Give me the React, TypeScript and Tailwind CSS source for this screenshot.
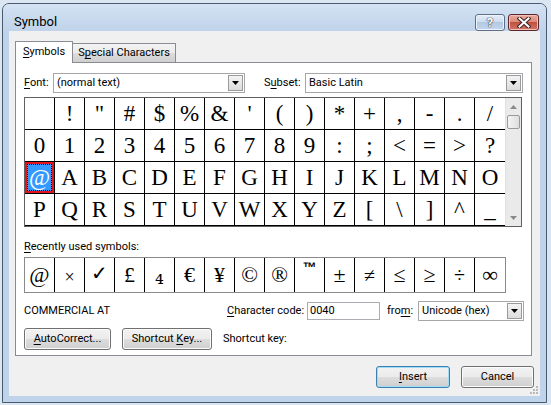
import React from 'react';

// Access-key letter (underlined), as in classic Windows dialogs
function K({ children }: { children: React.ReactNode }) {
  return <span className="underline underline-offset-[2px] decoration-[1px]">{children}</span>;
}

function Arrow({ color = '#000' }: { color?: string }) {
  return (
    <svg width="7" height="4" viewBox="0 0 7 4">
      <path d="M0 0h7L3.5 4z" fill={color} />
    </svg>
  );
}

function Combo({ value, width, height = 20 }: { value: string; width: string; height?: number }) {
  return (
    <div
      className={`flex items-center ${width} border border-[#a7a6aa] bg-white pl-[3px] pr-[1px]`}
      style={{ height }}
    >
      <span className="flex-1 truncate">{value}</span>
      <span className="flex h-[16px] w-[15px] items-center justify-center border border-[#9a9a9a] bg-[linear-gradient(to_bottom,#f4f4f4,#dcdcdc)]">
        <Arrow />
      </span>
    </div>
  );
}

function Button({ children, width, primary }: { children: React.ReactNode; width: string; primary?: boolean }) {
  return (
    <div
      className={`flex h-[22px] ${width} items-center justify-center rounded-[3px] border ${
        primary
          ? 'border-[#3c7fb1] shadow-[inset_0_0_0_1px_#9fdcf6]'
          : 'border-[#707070] shadow-[inset_0_0_0_1px_#fbfbfb]'
      } bg-[linear-gradient(to_bottom,#f2f2f2_0%,#ebebeb_50%,#dddddd_50%,#cfcfcf_100%)]`}
    >
      {children}
    </div>
  );
}

const gridChars = Array.from({ length: 64 }, (_, i) => String.fromCharCode(32 + i));

const recent: { ch: string; cls: string }[] = [
  { ch: '@', cls: 'text-[22px]' },
  { ch: '×', cls: 'text-[18px] pt-[3px]' },
  { ch: '✓', cls: "text-[20px] font-['DejaVu_Sans'] font-light pb-[4px]" },
  { ch: '£', cls: 'text-[22px]' },
  { ch: '₄', cls: "text-[22px] font-['DejaVu_Serif'] pt-[4px]" },
  { ch: '€', cls: 'text-[22px]' },
  { ch: '¥', cls: 'text-[22px]' },
  { ch: '©', cls: 'text-[22px]' },
  { ch: '®', cls: 'text-[22px]' },
  { ch: '™', cls: "text-[14px] font-bold font-['Liberation_Sans'] self-start pt-[2px]" },
  { ch: '±', cls: 'text-[22px]' },
  { ch: '≠', cls: 'text-[20px]' },
  { ch: '≤', cls: 'text-[22px]' },
  { ch: '≥', cls: 'text-[22px]' },
  { ch: '÷', cls: 'text-[20px]' },
  { ch: '∞', cls: 'text-[22px]' },
];

export default function App() {
  return (
    <div className="h-[405px] w-[551px] overflow-hidden bg-[#dbe6f3] pl-[2px] pt-[3px] font-[Roboto,'Liberation_Sans',sans-serif] text-[11px] leading-[14px] text-black">
      {/* window frame */}
      <div className="flex h-[400px] w-[545px] flex-col rounded-t-[7px] border border-[#4a5b70] bg-[#bfd3ea]">
        {/* title bar */}
        <div className="flex h-[27px] items-start rounded-t-[6px] bg-[linear-gradient(to_bottom,#d4e2f3,#bfd3ea)] pl-[11px] pr-[7px] pt-[10px]">
          <span className="flex-1 text-[13px] leading-[16px]">Symbol</span>
          <div className="flex gap-[3px]">
            <div className="flex h-[17px] w-[30px] items-center justify-center rounded-[3px] border border-[#5d6f87] bg-[linear-gradient(to_bottom,#e4edf8_0%,#cbdbee_50%,#b3c9e3_50%,#c3d6ec_100%)] shadow-[inset_0_0_0_1px_#eef4fb]">
              <span className="text-[13px] font-bold leading-none text-white [text-shadow:0_0_1px_#2d3b4d,0_0_1px_#2d3b4d,0_0_1px_#2d3b4d]">
                ?
              </span>
            </div>
            <div className="flex h-[17px] w-[31px] items-center justify-center rounded-[3px] border border-[#5c2430] bg-[linear-gradient(to_bottom,#e9a99b_0%,#d98876_50%,#c2523f_50%,#d07666_100%)] shadow-[inset_0_0_0_1px_#f0c2b8]">
              <svg width="14" height="11" viewBox="0 0 14 11">
                <path d="M2.5 1.5l9 8M11.5 1.5l-9 8" stroke="#3a2226" strokeWidth="4" strokeLinecap="square" />
                <path d="M2.5 1.5l9 8M11.5 1.5l-9 8" stroke="#fff" strokeWidth="2" strokeLinecap="square" />
              </svg>
            </div>
          </div>
        </div>

        {/* client area */}
        <div className="relative mx-[6px] mb-[6px] flex h-[365px] flex-col bg-[#f0f0f0] pl-[6px] pr-[6px] pt-[10px]">
          {/* tabs */}
          <div className="flex h-[21px] items-end">
            <div className="relative z-10 -mb-px flex h-[22px] w-[58px] items-center justify-center border-x border-t border-[#898c95] bg-white pb-[1px]">
              <span>
                <K>S</K>ymbols
              </span>
            </div>
            <div className="flex h-[19px] w-[103px] items-center justify-center border-r border-t border-[#898c95] bg-[linear-gradient(to_bottom,#f3f3f3_0%,#ebebeb_50%,#dddddd_50%,#cfcfcf_100%)]">
              <span>
                S<K>p</K>ecial Characters
              </span>
            </div>
          </div>

          {/* tab panel */}
          <div className="flex h-[294px] w-[517px] flex-col border border-[#898c95] bg-white pl-[8px] pr-[7px] pt-[10px]">
            {/* font / subset */}
            <div className="flex h-[20px] items-center">
              <span className="w-[29px]">
                <K>F</K>ont:
              </span>
              <Combo value="(normal text)" width="w-[192px]" />
              <span className="ml-[19px] w-[41px]">
                S<K>u</K>bset:
              </span>
              <Combo value="Basic Latin" width="w-[218px]" />
            </div>

            {/* character grid */}
            <div className="mt-[4px] flex w-[498px] border border-[#5f5f5f]">
              <div className="grid grid-cols-[repeat(16,30px)] font-['Liberation_Serif','DejaVu_Serif',serif] text-[23px] leading-none">
                {gridChars.map((ch, i) => {
                  const selected = ch === '@';
                  const lastCol = i % 16 === 15;
                  return (
                    <div
                      key={i}
                      className={`flex h-[32px] items-center justify-center border-b border-black ${
                        lastCol ? '' : 'border-r'
                      }`}
                    >
                      {selected ? (
                        <div className="flex h-full w-full items-center justify-center border-2 border-[#e2141c] bg-[#3399ff]">
                          <div className="flex h-full w-full items-center justify-center border border-dotted border-black text-white">
                            {ch}
                          </div>
                        </div>
                      ) : (
                        ch
                      )}
                    </div>
                  );
                })}
              </div>
              {/* scrollbar */}
              <div className="flex w-[17px] flex-col border-l border-[#e0e0e0] bg-[#eaeaea]">
                <div className="flex h-[17px] items-center justify-center">
                  <svg width="7" height="4" viewBox="0 0 7 4">
                    <path d="M0 4h7L3.5 0z" fill="#8a8a8a" />
                  </svg>
                </div>
                <div className="mx-[1px] h-[14px] rounded-[2px] border border-[#9a9a9a] bg-[linear-gradient(to_right,#f4f4f4,#dedede)]" />
                <div className="flex-1" />
                <div className="flex h-[17px] items-center justify-center">
                  <Arrow color="#8a8a8a" />
                </div>
              </div>
            </div>

            {/* recently used */}
            <div className="mt-[13px] h-[14px]">
              <K>R</K>ecently used symbols:
            </div>
            <div className="mt-[3px] flex h-[36px] w-[482px] border border-[#8a8a8a] font-['Liberation_Serif','DejaVu_Serif',serif] leading-none">
              {recent.map((r, i) => (
                <div
                  key={i}
                  className={`flex w-[30px] items-center justify-center border-black ${i < 15 ? 'border-r' : ''}`}
                >
                  <span className={r.cls}>{r.ch}</span>
                </div>
              ))}
            </div>

            {/* name / character code */}
            <div className="mt-[8px] flex h-[20px] items-center">
              <span className="w-[203px]">COMMERCIAL AT</span>
              <span className="w-[80px] whitespace-nowrap">
                <K>C</K>haracter code:
              </span>
              <div className="flex h-[18px] w-[73px] items-center border border-[#abadb3] bg-white pl-[2px]">0040</div>
              <span className="ml-[7px] w-[31px]">
                fro<K>m</K>:
              </span>
              <Combo value="Unicode (hex)" width="w-[106px]" />
            </div>

            {/* autocorrect / shortcut */}
            <div className="mt-[7px] flex h-[22px] items-center">
              <Button width="w-[87px]">
                <span>
                  <K>A</K>utoCorrect...
                </span>
              </Button>
              <div className="ml-[11px]">
                <Button width="w-[90px]">
                  <span>
                    Shortcut <K>K</K>ey...
                  </span>
                </Button>
              </div>
              <span className="ml-[11px]">Shortcut key:</span>
            </div>
          </div>

          {/* dialog buttons */}
          <div className="mt-[10px] flex justify-end">
            <Button width="w-[74px]" primary>
              <span>
                <K>I</K>nsert
              </span>
            </Button>
            <div className="ml-[11px]">
              <Button width="w-[73px]">
                <span>Cancel</span>
              </Button>
            </div>
          </div>

          {/* size grip */}
          <svg className="absolute bottom-[1px] right-[1px]" width="10" height="10" viewBox="0 0 10 10">
            <g fill="#b9b9b9">
              <rect x="7" y="1" width="2" height="2" />
              <rect x="4" y="4" width="2" height="2" />
              <rect x="7" y="4" width="2" height="2" />
              <rect x="1" y="7" width="2" height="2" />
              <rect x="4" y="7" width="2" height="2" />
              <rect x="7" y="7" width="2" height="2" />
            </g>
          </svg>
        </div>
      </div>
    </div>
  );
}
